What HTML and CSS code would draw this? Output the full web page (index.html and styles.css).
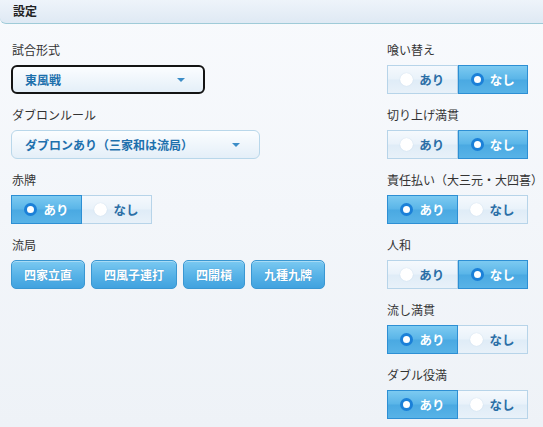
FILE: index.html
```html
<!DOCTYPE html>
<html lang="ja">
<head>
<meta charset="utf-8">
<link rel="stylesheet" href="styles.css">
</head>
<body>
<div class="panel">
  <div class="panel__header">設定</div>
  <div class="panel__body">
    <div class="col col--left">
      <div class="field">
        <div class="field__label">試合形式</div>
        <div class="select select--focus"><span class="select__text">東風戦</span><span class="select__arrow"></span></div>
      </div>
      <div class="field">
        <div class="field__label">ダブロンルール</div>
        <div class="select select--wide"><span class="select__text">ダブロンあり（三家和は流局）</span><span class="select__arrow"></span></div>
      </div>
      <div class="field">
        <div class="field__label">赤牌</div>
        <div class="toggle">
          <div class="toggle__seg is-on"><span class="radio"></span>あり</div>
          <div class="toggle__seg"><span class="radio"></span>なし</div>
        </div>
      </div>
      <div class="field">
        <div class="field__label">流局</div>
        <div class="btns">
          <div class="btn">四家立直</div>
          <div class="btn">四風子連打</div>
          <div class="btn">四開槓</div>
          <div class="btn">九種九牌</div>
        </div>
      </div>
    </div>
    <div class="col col--right">
      <div class="field">
        <div class="field__label">喰い替え</div>
        <div class="toggle">
          <div class="toggle__seg"><span class="radio"></span>あり</div>
          <div class="toggle__seg is-on"><span class="radio"></span>なし</div>
        </div>
      </div>
      <div class="field">
        <div class="field__label">切り上げ満貫</div>
        <div class="toggle">
          <div class="toggle__seg"><span class="radio"></span>あり</div>
          <div class="toggle__seg is-on"><span class="radio"></span>なし</div>
        </div>
      </div>
      <div class="field">
        <div class="field__label">責任払い（大三元・大四喜）</div>
        <div class="toggle">
          <div class="toggle__seg is-on"><span class="radio"></span>あり</div>
          <div class="toggle__seg"><span class="radio"></span>なし</div>
        </div>
      </div>
      <div class="field">
        <div class="field__label">人和</div>
        <div class="toggle">
          <div class="toggle__seg"><span class="radio"></span>あり</div>
          <div class="toggle__seg is-on"><span class="radio"></span>なし</div>
        </div>
      </div>
      <div class="field">
        <div class="field__label">流し満貫</div>
        <div class="toggle">
          <div class="toggle__seg is-on"><span class="radio"></span>あり</div>
          <div class="toggle__seg"><span class="radio"></span>なし</div>
        </div>
      </div>
      <div class="field">
        <div class="field__label">ダブル役満</div>
        <div class="toggle">
          <div class="toggle__seg is-on"><span class="radio"></span>あり</div>
          <div class="toggle__seg"><span class="radio"></span>なし</div>
        </div>
      </div>
    </div>
  </div>
</div>
</body>
</html>
```
FILE: styles.css
```css
html, body {
  margin: 0;
  padding: 0;
  height: 100%;
}
body {
  font-family: "Noto Sans CJK JP", "Noto Sans", sans-serif;
  font-size: 12px;
  color: #333;
  background: linear-gradient(#f8fafd, #eef2f7);
}
.panel {
  min-height: 100%;
}
.panel__header {
  height: 23px;
  line-height: 22px;
  padding-left: 13px;
  font-size: 12px;
  font-weight: bold;
  color: #222;
  background: linear-gradient(#eef4fa, #dfe9f4);
  border-bottom: 1px solid #9fcbd8;
  border-bottom-left-radius: 6px;
}
.panel__body {
  display: flex;
  justify-content: space-between;
  padding: 18px 15px 0 11px;
}
.col {
  display: flex;
  flex-direction: column;
}
.col--right {
  width: 141px;
}
.field {
  margin-bottom: 13px;
}
.field__label {
  height: 16px;
  line-height: 16px;
  margin-bottom: 7px;
  padding-left: 1px;
  white-space: nowrap;
  color: #333;
}
.col--right .field__label {
  padding-left: 0;
}
.select {
  box-sizing: border-box;
  width: 194px;
  height: 29px;
  display: flex;
  align-items: center;
  justify-content: space-between;
  padding: 0 19px 0 13px;
  border: 1px solid #b9d7ea;
  border-radius: 6px;
  background: linear-gradient(#fbfdff, #e4eff8);
}
.select--focus {
  border: 2px solid #141414;
  padding: 0 18px 0 12px;
}
.select--wide {
  width: 249px;
}
.select__text {
  font-weight: bold;
  color: #1d70ad;
  white-space: nowrap;
}
.select__arrow {
  width: 0;
  height: 0;
  border-left: 4px solid transparent;
  border-right: 4px solid transparent;
  border-top: 4px solid #3c8dc7;
}
.toggle {
  display: flex;
  width: 141px;
  height: 29px;
}
.toggle__seg {
  box-sizing: border-box;
  flex: 1;
  display: flex;
  align-items: center;
  justify-content: center;
  gap: 6px;
  font-size: 12.5px;
  font-weight: bold;
  color: #2a6ea6;
  border: 1px solid #b7d4e9;
  background: linear-gradient(#f5f9fd, #e9f2fa 48%, #dfecf7 52%, #e8f1f9);
}
.toggle__seg + .toggle__seg {
  border-left: none;
}
.toggle__seg.is-on {
  color: #fff;
  border: 1px solid #2d8fd4;
  background: linear-gradient(#7ccaf1, #5ab5e8 48%, #4aa9e2 52%, #58b3e7);
}
.radio {
  box-sizing: border-box;
  width: 13px;
  height: 13px;
  border-radius: 50%;
  background: #fff;
  box-shadow: 0 0 1px rgba(120, 160, 200, 0.4);
}
.is-on .radio {
  border: 3.5px solid #1b80d8;
  box-shadow: none;
}
.btns {
  display: flex;
  gap: 6px;
}
.btn {
  box-sizing: border-box;
  height: 29px;
  line-height: 27px;
  padding: 0 12px;
  border: 1px solid #3a97d2;
  border-radius: 5px;
  font-weight: bold;
  color: #fff;
  white-space: nowrap;
  text-shadow: 0 0 1px rgba(30, 100, 160, 0.5);
  background: linear-gradient(#7bc9f1, #56b2e7 55%, #41a2df);
  box-shadow: inset 0 1px 0 rgba(255, 255, 255, 0.35);
}
```
